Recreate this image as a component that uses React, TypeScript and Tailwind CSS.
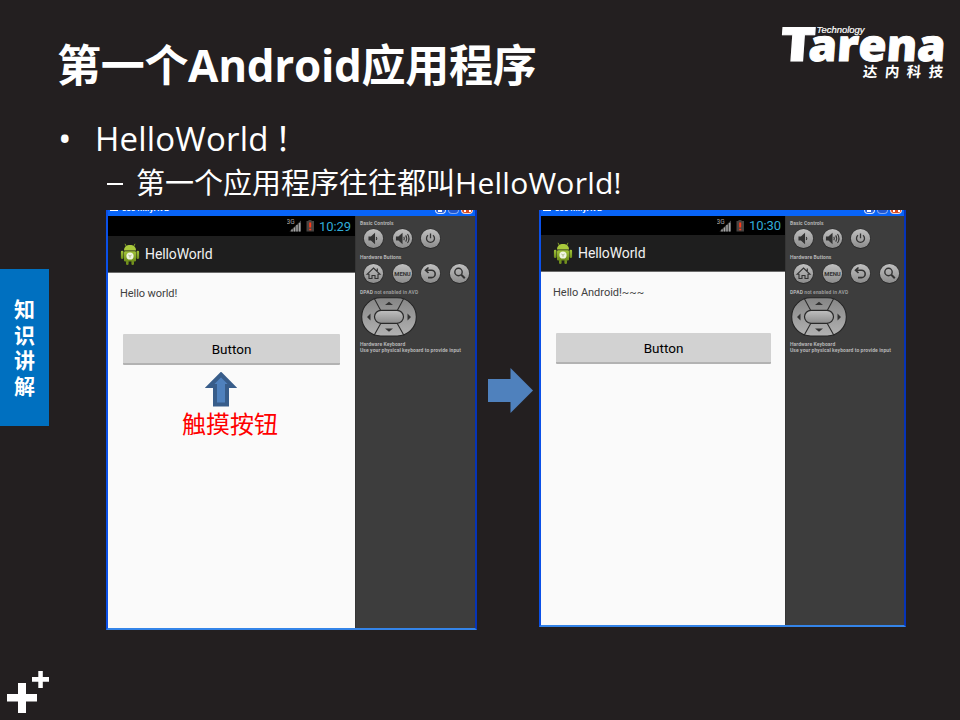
import React from "react";

const cjk = "font-['Open_Sans','Noto_Sans_CJK_SC',sans-serif]";

function Logo() {
  return (
    <svg width="172" height="62" viewBox="0 0 172 62" fill="#fff" overflow="visible">
      <g transform="skewX(-4)" fontFamily="Open Sans, sans-serif" fontWeight="800">
        <text x="3" y="39.500" fontSize="47" textLength="35" lengthAdjust="spacingAndGlyphs" stroke="#fff" strokeWidth="1">T</text>
        <text x="31.500" y="39.500" fontSize="44" textLength="137" lengthAdjust="spacingAndGlyphs" stroke="#fff" strokeWidth="1">arena</text>
      </g>
      <text x="37.500" y="11.500" fontSize="9" fontFamily="Liberation Sans, sans-serif" fontStyle="italic" textLength="48" lengthAdjust="spacingAndGlyphs" stroke="#fff" strokeWidth="0.200">Technology</text>
      <g transform="translate(5 0) skewX(-5)">
        <text x="83.500" y="56.500" fontSize="14.500" fontWeight="700" fontFamily="Noto Sans CJK SC, sans-serif" letterSpacing="7.400">达内科技</text>
      </g>
    </svg>
  );
}

function Robot() {
  return (
    <svg width="20" height="23" viewBox="0 0 20 23">
      <defs>
        <linearGradient id="body" x1="0" y1="0" x2="0" y2="1">
          <stop offset="0" stopColor="#a3c63a" /><stop offset="1" stopColor="#6c8c1a" />
        </linearGradient>
      </defs>
      <g stroke="#8fae2b" strokeWidth="0.9"><path d="M6.3 3.5 5 .8M13.7 3.500 15 .8" /></g>
      <path d="M4 7.600C4 3.800 6.600 2 10 2s6 1.800 6 5.600z" fill="#a9c93c" />
      <rect x="4" y="8.200" width="12" height="10.200" rx="1.200" fill="url(#body)" />
      <rect x="0.900" y="7.800" width="2.600" height="8.200" rx="1.200" fill="url(#body)" />
      <rect x="16.500" y="7.800" width="2.600" height="8.200" rx="1.200" fill="url(#body)" />
      <rect x="6" y="17.500" width="2.600" height="4.500" rx="1.200" fill="#718f1d" />
      <rect x="11.400" y="17.500" width="2.600" height="4.500" rx="1.200" fill="#718f1d" />
      <circle cx="10" cy="13" r="3.600" fill="#f0f4e4" />
      <path d="M8.300 12l1.700 1 1.700-1M10 13v1.800" stroke="#a3b57a" strokeWidth="0.800" fill="none" />
    </svg>
  );
}

function StatusIcons() {
  return (
    <svg width="28" height="16" viewBox="0 0 28 16">
      <text x="-0.500" y="6" fontSize="6.500" fontFamily="Roboto, sans-serif" fill="#a8a8a8">3G</text>
      <path d="M2.500 13.500 14 2.500v11z" fill="#4c4c4c" />
      <path d="M5 11.500v2M7.500 9.500v4M10 7v6.500M12.700 5v8.500" stroke="#a8a8a8" strokeWidth="1.300" />
      <path d="M21.500 2h3v1H27v10.500h-7.500V3h2z" fill="#484341" />
      <path d="M23.200 4.500v5M23.200 10.700v1.600" stroke="#ff3818" strokeWidth="2" />
    </svg>
  );
}

const glyphs: Record<string, React.ReactNode> = {
  low: <><path d="M6 9h2.300L11.500 6v9L8.300 12H6z" fill="#333" /><path d="M13.300 9q1 1.500 0 3" /></>,
  high: <><path d="M4.500 9h2.300L10 6v9L6.800 12H4.500z" fill="#333" /><path d="M11.800 8.800q1 1.700 0 3.400M13.700 7.400q2 3.100 0 6.200M15.500 6q3 4.500 0 9" /></>,
  power: <><path d="M8 7.300a4 4 0 1 0 5 0M10.500 5.500v4.800" strokeWidth="1.300" /></>,
  home: <><path d="M4 11.300 10.500 5l6.500 6.300h-2v4.200h-3v-3H9v3H6v-4.200z M14.300 8V5.500" /></>,
  menu: <text x="10.500" y="12.700" fontSize="6" textAnchor="middle" fontWeight="700" fontFamily="Roboto, sans-serif" textLength="16.500" lengthAdjust="spacingAndGlyphs" fill="#333" stroke="none">MENU</text>,
  back: <path d="M8.500 4.500 5.500 7.200l3 2.800M6 7.200h5.500a3.700 3.700 0 0 1 0 7.400H8" strokeWidth="1.600" />,
  search: <><circle cx="9.500" cy="9" r="3.700" strokeWidth="1.400" /><path d="m12.300 11.800 3.500 3.500" strokeWidth="2" /></>,
};

function Key({ name }: { name: string }) {
  return (
    <svg width="21" height="21" viewBox="0 0 21 21" className="shrink-0">
      <defs>
        <linearGradient id="key" x1="0" y1="0" x2="0" y2="1">
          <stop offset="0" stopColor="#c0c0c0" /><stop offset="1" stopColor="#8c8c8c" />
        </linearGradient>
      </defs>
      <circle cx="10.500" cy="10.700" r="10.200" fill="#2b2b2b" />
      <circle cx="10.500" cy="10.500" r="9.600" fill="url(#key)" />
      <g fill="none" stroke="#333" strokeWidth="1.100">{glyphs[name]}</g>
    </svg>
  );
}

function DPad() {
  return (
    <svg width="56" height="40" viewBox="0 0 56 40" className="shrink-0">
      <defs>
        <linearGradient id="pad" x1="0" y1="0" x2="0" y2="1">
          <stop offset="0" stopColor="#858585" /><stop offset="1" stopColor="#b2b2b2" />
        </linearGradient>
      </defs>
      <rect x="0.700" y="0.700" width="54.600" height="38.300" rx="19" fill="url(#pad)" stroke="#242424" strokeWidth="1.100" />
      <path d="M13 1l7 13M43 1l-7 13M13 38.500l7-12.500M43 38.500l-7-12.500" stroke="#2c2c2c" strokeWidth="1.100" />
      <rect x="13.500" y="13.300" width="29" height="13" rx="6.500" fill="url(#key)" stroke="#292929" strokeWidth="1.200" />
      <path d="M24 8l4-3.200L32 8zM24 31.500l4 3.200 4-3.200zM9.500 16.500 6 20l3.500 3.500zM46.500 16.500 50 20l-3.500 3.500z" fill="#333" />
    </svg>
  );
}

function Label({ children, className = "" }: { children: React.ReactNode; className?: string }) {
  return <div className={`whitespace-nowrap h-[6px] leading-[6px] text-[5px] font-bold tracking-[0.07px] text-[#b4b4b4] ${className}`}>{children}</div>;
}

function Panel() {
  return (
    <div className="flex flex-col flex-1 min-w-0 border-l border-[#353535] bg-[#3d3d3d] pl-1 pt-1 font-[Roboto,sans-serif]">
      <Label>Basic Controls</Label>
      <div className="flex gap-[7.700px] ml-[3px] mt-[2px]"><Key name="low" /><Key name="high" /><Key name="power" /></div>
      <Label className="mt-[5px]">Hardware Buttons</Label>
      <div className="flex gap-[7.700px] ml-[3px] mt-[3px]"><Key name="home" /><Key name="menu" /><Key name="back" /><Key name="search" /></div>
      <Label className="mt-[5px]">DPAD <span className="text-[#999]">not enabled in AVD</span></Label>
      <div className="ml-[1px] mt-[2px] h-[40px]"><DPad /></div>
      <Label className="mt-[4px]">Hardware Keyboard</Label>
      <Label>Use your physical keyboard to provide input</Label>
    </div>
  );
}

function TitleBar() {
  return (
    <div className="flex h-[6px] items-start overflow-hidden bg-[#0864f8] text-white">
      <div className="h-[1px] w-[8px] ml-[2px] bg-white" />
      <div className="ml-[4px] -mt-[6px] h-[9px] text-[8px] leading-[9px] font-bold font-['Liberation_Sans',sans-serif]">5554:MyAVD</div>
      <div className="ml-auto mr-[2px] flex gap-[2px]">
        <div className="h-[4px] w-[11px] rounded-b-sm border border-t-0 border-[#d8e4fa] bg-[#2c60d8] pl-[2px]"><div className="h-[2px] w-[4px] bg-white" /></div>
        <div className="h-[4px] w-[11px] rounded-b-sm border border-t-0 border-[#86a9ef] bg-[#2458d0]" />
        <div className="h-[4px] w-[12px] rounded-b-sm border border-t-0 border-[#f2d8d0] bg-[#db4b22] flex justify-center gap-[3px]"><div className="h-[2px] w-[2px] bg-white" /><div className="h-[2px] w-[2px] bg-white" /></div>
      </div>
    </div>
  );
}

function Emulator({ second, time, message, children }: { second?: boolean; time: string; message: React.ReactNode; children?: React.ReactNode }) {
  return (
    <div className={`flex flex-col shrink-0 border-r-2 border-b-2 border-l-2 border-l-[#0b50e8] border-r-[#0634b8] border-b-[#3484e8] ${second ? "w-[367px] h-[417px]" : "w-[371px] h-[420px]"}`}>
      <TitleBar />
      <div className="flex flex-1 min-h-0">
        <div className={`flex flex-col bg-[#fafafa] font-['Roboto',sans-serif] ${second ? "w-[244px]" : "w-[247px]"}`}>
          <div className={`flex items-center justify-end bg-black pr-1 ${second ? "h-[19px]" : "h-[20px]"}`}>
            <StatusIcons />
            <span className="ml-[4px] text-[13px] leading-none tracking-[-0.05px] text-[#31acd8]">{time}</span>
          </div>
          <div className="flex h-[37px] items-center border-b border-[#6b6b6b] bg-[#1e1e1e] pl-3 text-[#f1f1f1]">
            <Robot />
            <span className="ml-[5px] mt-[1px] text-[14px] tracking-[-0.1px]">HelloWorld</span>
          </div>
          <div className="h-[60px] pl-3 pt-[13px] text-[11px] leading-[15px] text-[#404040] tracking-[-0.07px]">{message}</div>
          <div className={`ml-[15px] mt-[1px] flex h-[31px] items-center justify-center rounded-[1px] border-b-2 border-[#b2b2b2] bg-[#d2d2d2] pt-[1px] text-[13.500px] text-black ${second ? "w-[215px]" : "w-[217px]"}`}>Button</div>
          {children}
        </div>
        <Panel />
      </div>
    </div>
  );
}

export default function App() {
  return (
    <main className={`flex h-[720px] w-[960px] flex-col overflow-hidden bg-[#231f20] text-white ${cjk}`}>
      <header className="flex h-[116px] justify-between pl-[57px] pr-[9px]">
        <h1 className="mt-[35px] whitespace-nowrap text-[44px] leading-[60px] font-bold tracking-[-0.300px]">第一个Android应用程序</h1>
        <div className="mt-[21px]"><Logo /></div>
      </header>
      <div className="flex h-[45px] items-center whitespace-nowrap pl-[58px] text-[33px] leading-[44px]">
        <span className="w-[37px] text-[36px]">•</span><span className="tracking-[0.200px]">HelloWorld</span><span className="ml-[6px]">！</span>
      </div>
      <div className="flex h-[43px] items-center whitespace-nowrap pl-[107px] text-[29px] leading-[40px]">
        <span className="mr-[13px] mt-[3px] h-[2px] w-[16px] bg-white" /><span>第一个应用程序往往都叫<span className="text-[30px] tracking-[0.250px]">HelloWorld!</span></span>
      </div>
      <section className="mt-[6px] flex h-[420px]">
        <div className="w-[106px] pt-[59px]">
          <div className="flex h-[157px] w-[49px] flex-col items-center justify-center bg-[#0070c0] pt-[1px] text-[21px] leading-[25.500px] font-bold">
            <span>知</span><span>识</span><span>讲</span><span>解</span>
          </div>
        </div>
        <Emulator time="10:29" message="Hello world!">
          <div className="ml-[73px] mt-[7px] flex w-[98px] flex-col items-center">
            <svg width="32" height="36" viewBox="0 0 32 36" className="mr-[18px]">
              <path d="M16 2.500 27.500 14H22v18.500H10V14H4.500z" fill="#4f81bd" stroke="#385d8a" strokeWidth="4" />
            </svg>
            <span className={`-mt-[2px] whitespace-nowrap text-[24px] leading-[36px] text-[#ff0000] ${cjk}`}>触摸按钮</span>
          </div>
        </Emulator>
        <div className="w-[62px] pt-[158px] pl-[11px]">
          <svg width="45" height="45" viewBox="0 0 45 45"><path d="M0 11h22.500V0L45 22.500 22.500 45V34H0z" fill="#4f81bd" /></svg>
        </div>
        <Emulator second time="10:30" message={<span className="tracking-[-0.02px]">Hello Android!~~~</span>} />
      </section>
      <footer className="flex-1 pl-[7px] pt-[41px]">
        <svg width="43" height="43" viewBox="0 0 43 43" fill="#fff">
          <path d="M11 12h8v11h11v7.500H19V42h-8V30.500H0V23h11z" />
          <path d="M31.300 0h4.500v6H42v4.800h-6.200V17h-4.500v-6.200H25V6h6.300z" />
        </svg>
      </footer>
    </main>
  );
}
